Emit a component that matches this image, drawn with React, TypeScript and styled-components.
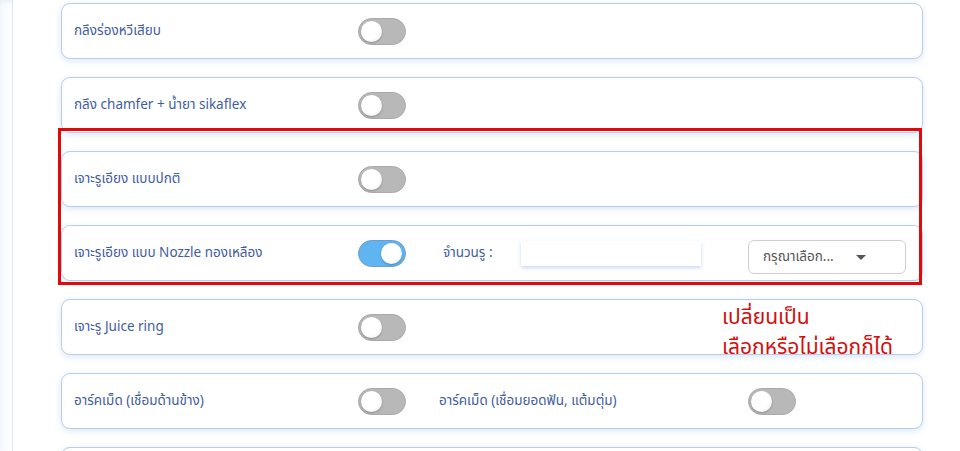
import React from 'react'
import styled, { createGlobalStyle } from 'styled-components'

const GlobalStyle = createGlobalStyle`
  html, body {
    margin: 0;
    padding: 0;
    background: #fff;
  }
  body {
    font-family: "Noto Sans Thai", "Noto Sans", "DejaVu Sans", sans-serif;
    overflow: hidden;
  }
`

const Page = styled.div`
  height: 451px;
  padding-left: 12px;
  background: linear-gradient(90deg, #f4f8fd 0%, #ffffff 12px);
  box-shadow: inset 0 4px 4px -2px #e6eef9;
  overflow: hidden;
`

const Panel = styled.div`
  position: relative;
  height: 100%;
  border-left: 1px solid #d9e6f5;
  background: #fff;
  padding: 3px 37px 0 48px;
  display: flex;
  flex-direction: column;
  gap: 18px;
`

const Card = styled.div`
  flex: 0 0 56px;
  box-sizing: border-box;
  border: 1px solid #b9cde9;
  border-radius: 9px;
  background: #fff;
  box-shadow: 0 2px 6px rgba(150, 185, 230, 0.35);
  display: grid;
  grid-template-columns: 284px 81px 309px 1fr;
  align-items: center;
  padding-left: 12px;
`

const Label = styled.span`
  font-size: 13.5px;
  color: #3f5c9f;
  white-space: nowrap;
`

const CountLabel = styled(Label)`
  width: 82px;
  padding-left: 4px;
  box-sizing: border-box;
`

const Cell = styled.div`
  display: flex;
  align-items: center;
`

const Track = styled.div<{ $on?: boolean }>`
  position: relative;
  width: 48px;
  height: 27px;
  box-sizing: border-box;
  border-radius: 14px;
  background: ${p => (p.$on ? '#5fb4f1' : '#b8b8b8')};
  border: 1px solid ${p => (p.$on ? '#6b9fcc' : '#a9a9a9')};
`

const Knob = styled.div<{ $on?: boolean }>`
  position: absolute;
  top: 2px;
  left: ${p => (p.$on ? '22px' : '2px')};
  width: 21px;
  height: 21px;
  border-radius: 50%;
  background: radial-gradient(circle at 40% 40%, #ffffff 55%, #e4e4e4 100%);
  box-shadow: 0 1px 2px rgba(0, 0, 0, 0.25);
`

const CountInput = styled.div`
  width: 180px;
  height: 25px;
  background: #fff;
  box-shadow: 0 2px 4px rgba(140, 170, 210, 0.45);
`

const Select = styled.div`
  width: 158px;
  height: 34px;
  margin-top: 8px;
  box-sizing: border-box;
  border: 1px solid #cfcfcf;
  border-radius: 6px;
  display: flex;
  align-items: center;
  justify-content: space-between;
  padding: 0 39px 0 14px;
  font-size: 13.5px;
  color: #555;
`

const Caret = styled.span`
  width: 0;
  height: 0;
  border-left: 5px solid transparent;
  border-right: 5px solid transparent;
  border-top: 5px solid #555;
`

const Highlight = styled.div`
  position: absolute;
  left: 45px;
  top: 128px;
  width: 864px;
  height: 157px;
  box-sizing: border-box;
  border: 3px solid #e00a0a;
  pointer-events: none;
`

const Note = styled.div`
  position: absolute;
  left: 709px;
  top: 303px;
  font-family: "Noto Sans Thai", "Noto Sans", "DejaVu Sans", sans-serif;
  font-size: 21px;
  line-height: 30px;
  color: #d40d0d;
`

const Toggle = ({ on }: { on?: boolean }) => (
  <Track $on={on}>
    <Knob $on={on} />
  </Track>
)

type Row = { label: string; on?: boolean; second?: 'count' | string }

const rows: Row[] = [
  { label: 'กลึงร่องหวีเสียบ' },
  { label: 'กลึง chamfer + น้ำยา sikaflex' },
  { label: 'เจาะรูเอียง แบบปกติ' },
  { label: 'เจาะรูเอียง แบบ Nozzle ทองเหลือง', on: true, second: 'count' },
  { label: 'เจาะรู Juice ring' },
  { label: 'อาร์คเม็ด (เชื่อมด้านข้าง)', second: 'อาร์คเม็ด (เชื่อมยอดฟัน, แต้มตุ่ม)' },
]

export default function App() {
  return (
    <>
      <GlobalStyle />
      <Page>
        <Panel>
          {rows.map(r => (
            <Card key={r.label}>
              <Label>{r.label}</Label>
              <Cell>
                <Toggle on={r.on} />
              </Cell>
              {r.second === 'count' ? (
                <>
                  <Cell>
                    <CountLabel>จำนวนรู :</CountLabel>
                    <CountInput />
                  </Cell>
                  <Cell>
                    <Select>
                      กรุณาเลือก...
                      <Caret />
                    </Select>
                  </Cell>
                </>
              ) : r.second ? (
                <>
                  <Label>{r.second}</Label>
                  <Cell>
                    <Toggle />
                  </Cell>
                </>
              ) : null}
            </Card>
          ))}
          <Card />
          <Highlight />
          <Note>
            เปลี่ยนเป็น
            <br />
            เลือกหรือไม่เลือกก็ได้
          </Note>
        </Panel>
      </Page>
    </>
  )
}
